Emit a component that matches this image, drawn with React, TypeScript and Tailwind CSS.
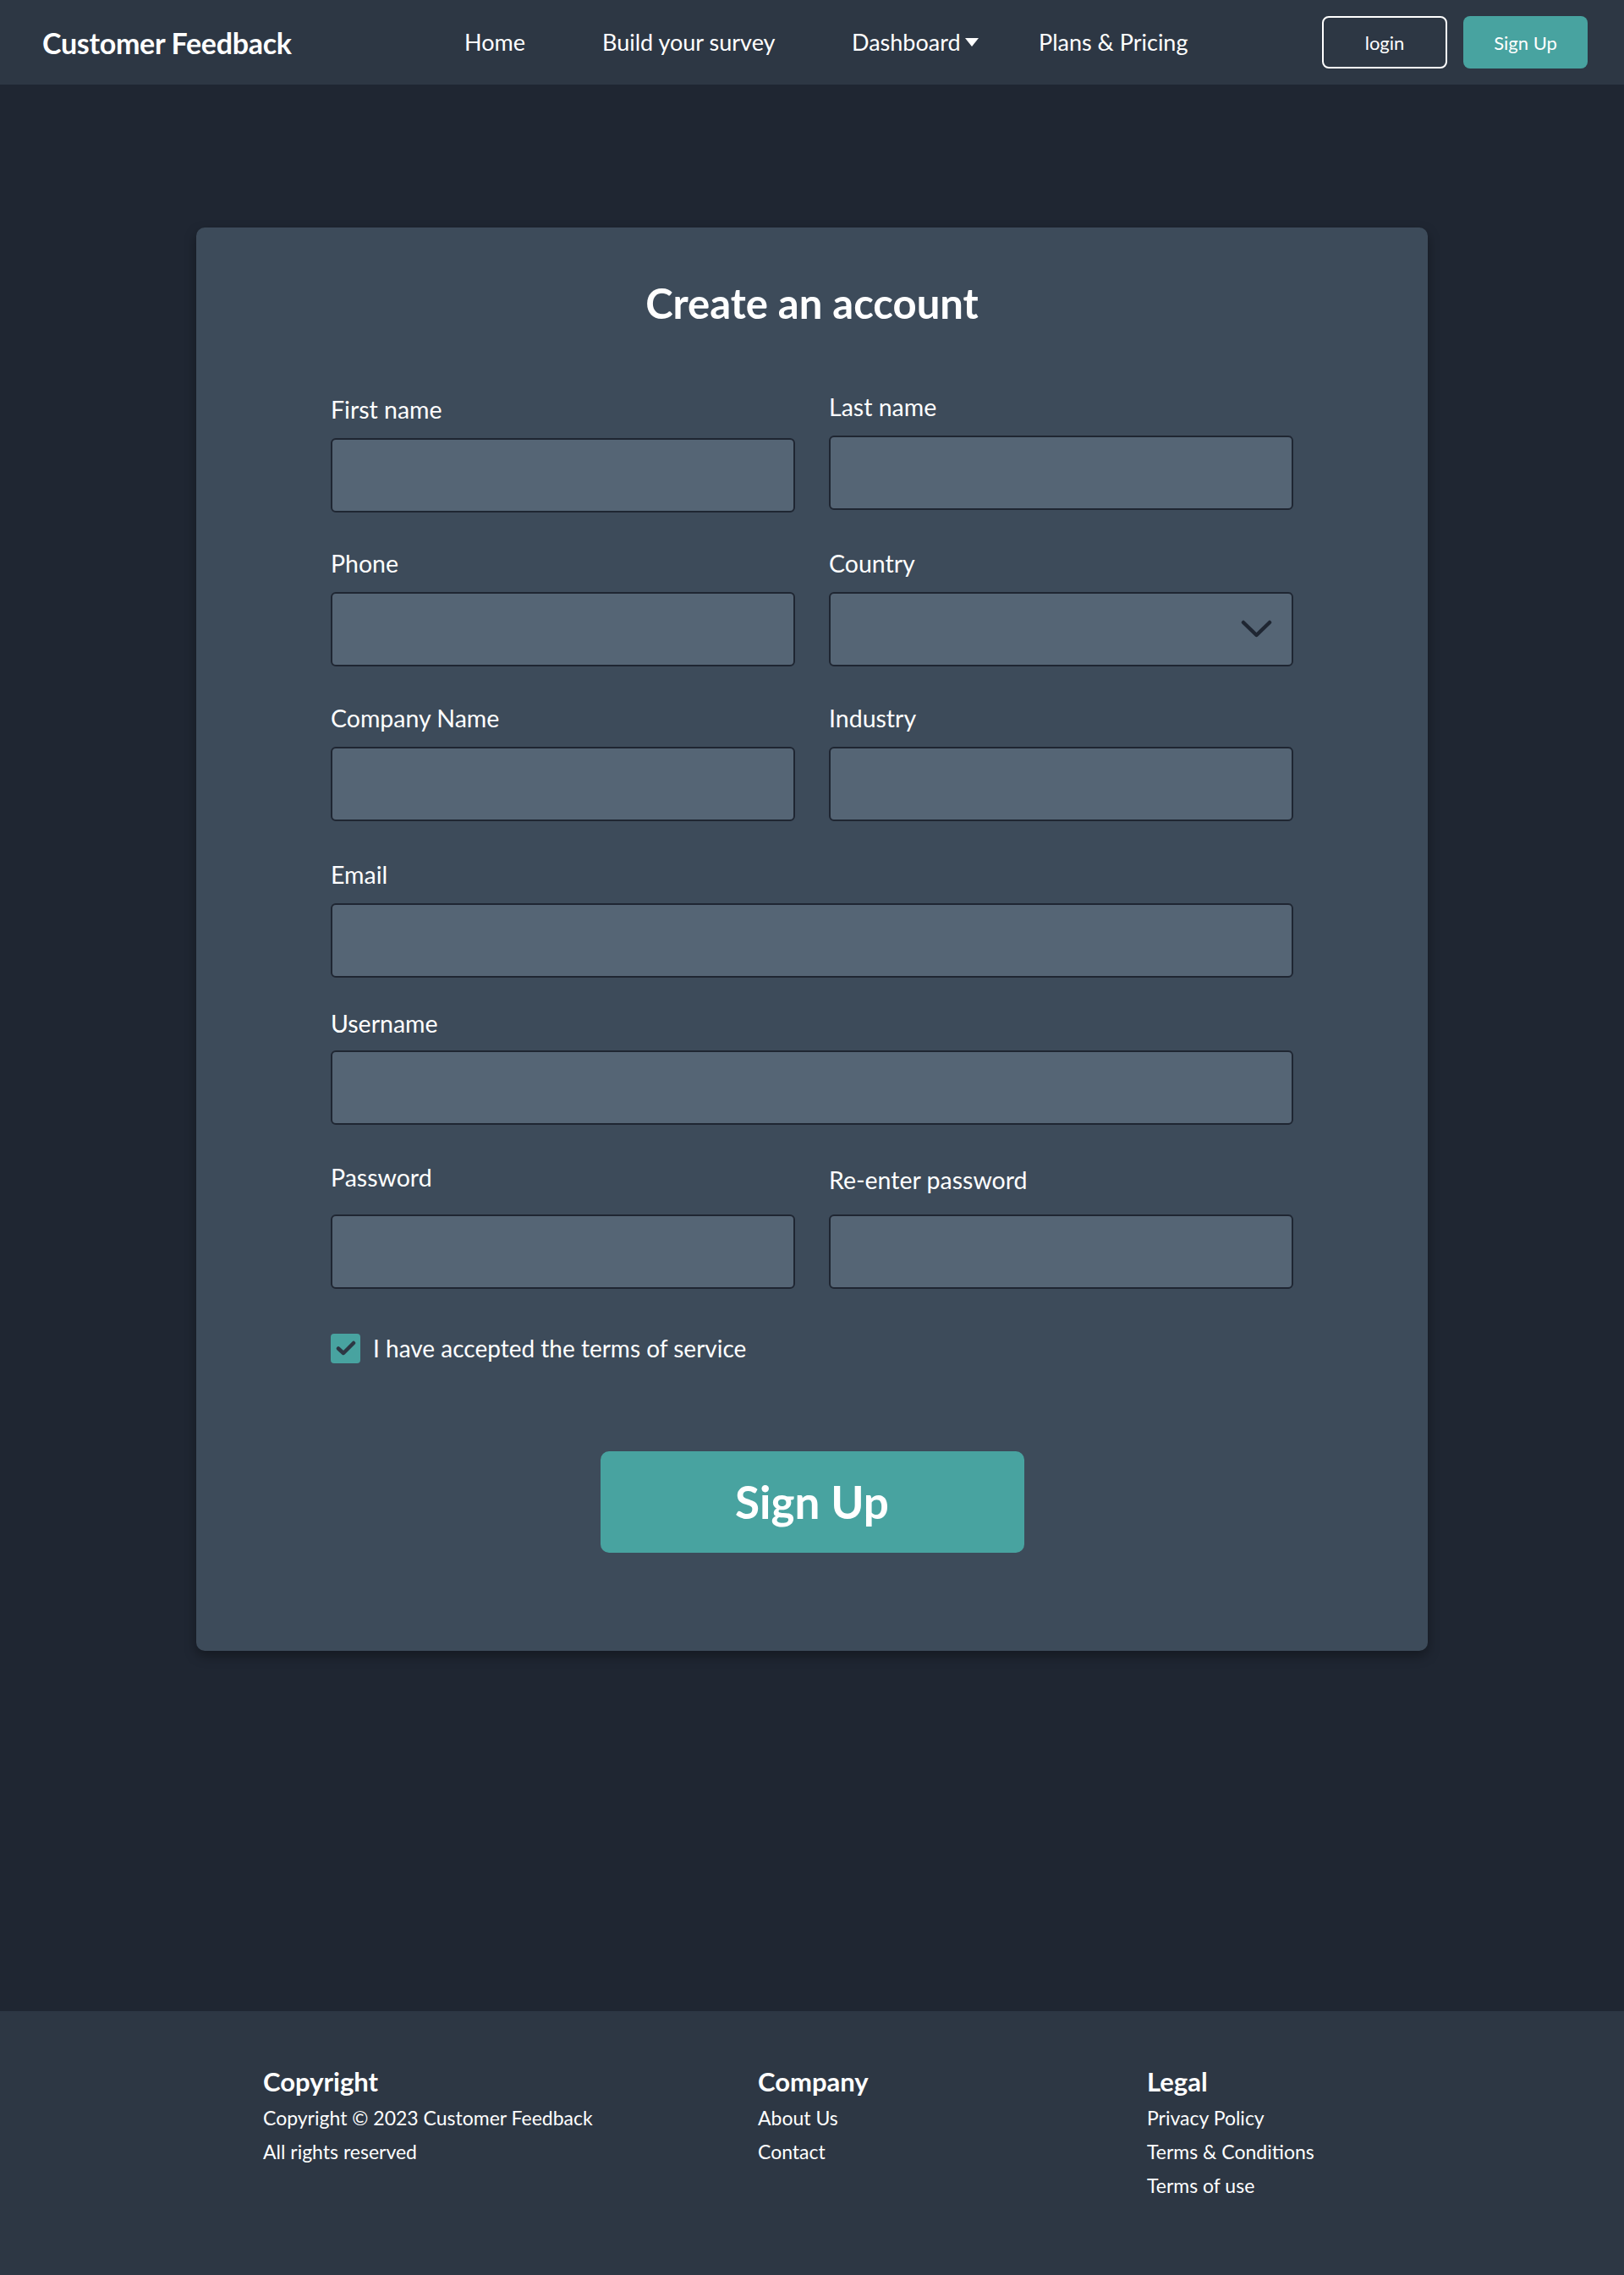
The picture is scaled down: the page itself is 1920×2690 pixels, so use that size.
import React from "react";

const font = { fontFamily: "Lato, 'Noto Sans', sans-serif" };

function Field({ label, select = false, labelGap = "mt-[16px]" }: { label: string; select?: boolean; labelGap?: string }) {
  return (
    <div className="flex flex-col">
      <label className="block h-[36px] text-[28.5px] leading-[36px] text-white">{label}</label>
      <div className={`relative ${labelGap} h-[88px] rounded-[6px] border-2 border-[#1f2632] bg-[#556575]`}>
        {select && (
          <svg
            className="absolute right-[23px] top-1/2 -translate-y-1/2"
            width="37"
            height="22"
            viewBox="0 0 37 22"
            fill="none"
          >
            <path d="M3 3 L18.5 18 L34 3" stroke="#1f2632" strokeWidth="4.5" strokeLinecap="round" strokeLinejoin="round" />
          </svg>
        )}
      </div>
    </div>
  );
}

export default function App() {
  return (
    <div className="flex min-h-[2690px] flex-col bg-[#1f2632] text-white" style={font}>
      {/* Navbar */}
      <header className="flex h-[100px] shrink-0 items-center bg-[#2d3744] pl-[50px] pr-[43px]">
        <div className="w-[499px] text-[34px] font-bold tracking-[-0.3px]">Customer Feedback</div>
        <nav className="flex items-center text-[27px]">
          <a className="w-[163px]">Home</a>
          <a className="w-[295px]">Build your survey</a>
          <a className="flex w-[221px] items-center">
            Dashboard
            <svg className="ml-[5px]" width="16" height="10" viewBox="0 0 16 10">
              <path d="M0 0 H16 L8 10 Z" fill="#ffffff" />
            </svg>
          </a>
          <a>Plans &amp; Pricing</a>
        </nav>
        <div className="ml-auto flex items-center gap-[19px]">
          <button className="flex h-[62px] w-[148px] items-center justify-center rounded-[8px] border-2 border-white text-[22px] text-white">
            login
          </button>
          <button className="flex h-[62px] w-[147px] items-center justify-center rounded-[8px] bg-[#48a3a0] text-[22px] text-white">
            Sign Up
          </button>
        </div>
      </header>

      {/* Main */}
      <main className="shrink-0 pt-[169px] pb-[426px]">
        <div className="mx-auto w-[1456px] rounded-[10px] bg-[#3d4b5a] px-[159px] pt-[62px] pb-[116px] shadow-[0_6px_14px_rgba(0,0,0,0.35)]">
          <h1 className="text-center text-[49px] font-bold leading-[54px]">Create an account</h1>

          <div className="mt-[81px] flex flex-col gap-[43px]">
            <div className="-mb-[1px] grid grid-cols-2 gap-x-[40px]">
              <Field label="First name" />
              <div className="-mt-[3px]">
                <Field label="Last name" />
              </div>
            </div>
            <div className="grid grid-cols-2 gap-x-[40px]">
              <Field label="Phone" />
              <Field label="Country" select />
            </div>
            <div className="grid grid-cols-2 gap-x-[40px]">
              <Field label="Company Name" />
              <Field label="Industry" />
            </div>
            <div className="mt-[2px]">
              <Field label="Email" />
            </div>
            <div className="-mt-[7px]">
              <Field label="Username" labelGap="mt-[14px]" />
            </div>
            <div className="mt-[1px] grid grid-cols-2 gap-x-[40px]">
              <Field label="Password" labelGap="mt-[26px]" />
              <div className="flex flex-col">
                <label className="mt-[3px] block h-[36px] text-[28.5px] leading-[36px] text-white">Re-enter password</label>
                <div className="mt-[23px] h-[88px] rounded-[6px] border-2 border-[#1f2632] bg-[#556575]" />
              </div>
            </div>
          </div>

          <div className="mt-[52px] flex items-center gap-[15px]">
            <div className="flex h-[35px] w-[35px] items-center justify-center rounded-[4px] bg-[#48a3a0]">
              <svg width="24" height="20" viewBox="0 0 24 20" fill="none">
                <path d="M3 10.5 L9 16 L21 4" stroke="#2d3744" strokeWidth="4.5" strokeLinecap="round" strokeLinejoin="round" />
              </svg>
            </div>
            <span className="text-[28px] leading-[36px]">I have accepted the terms of service</span>
          </div>

          <div className="mt-[104px] flex justify-center">
            <button className="flex h-[120px] w-[501px] items-center justify-center rounded-[10px] bg-[#48a3a0] text-[53px] font-bold text-white">
              Sign Up
            </button>
          </div>
        </div>
      </main>

      {/* Footer */}
      <footer className="flex-1 bg-[#2d3744] pl-[311px] pt-[63px]">
        <div className="flex">
          <div className="w-[585px]">
            <h3 className="h-[43px] text-[31px] font-bold leading-[40px]">Copyright</h3>
            <p className="text-[23px] leading-[40px]">Copyright © 2023 Customer Feedback</p>
            <p className="text-[23px] leading-[40px]">All rights reserved</p>
          </div>
          <div className="w-[460px]">
            <h3 className="h-[43px] text-[31px] font-bold leading-[40px]">Company</h3>
            <p className="text-[23px] leading-[40px]">About Us</p>
            <p className="text-[23px] leading-[40px]">Contact</p>
          </div>
          <div>
            <h3 className="h-[43px] text-[31px] font-bold leading-[40px]">Legal</h3>
            <p className="text-[23px] leading-[40px]">Privacy Policy</p>
            <p className="text-[23px] leading-[40px]">Terms &amp; Conditions</p>
            <p className="text-[23px] leading-[40px]">Terms of use</p>
          </div>
        </div>
      </footer>
    </div>
  );
}
